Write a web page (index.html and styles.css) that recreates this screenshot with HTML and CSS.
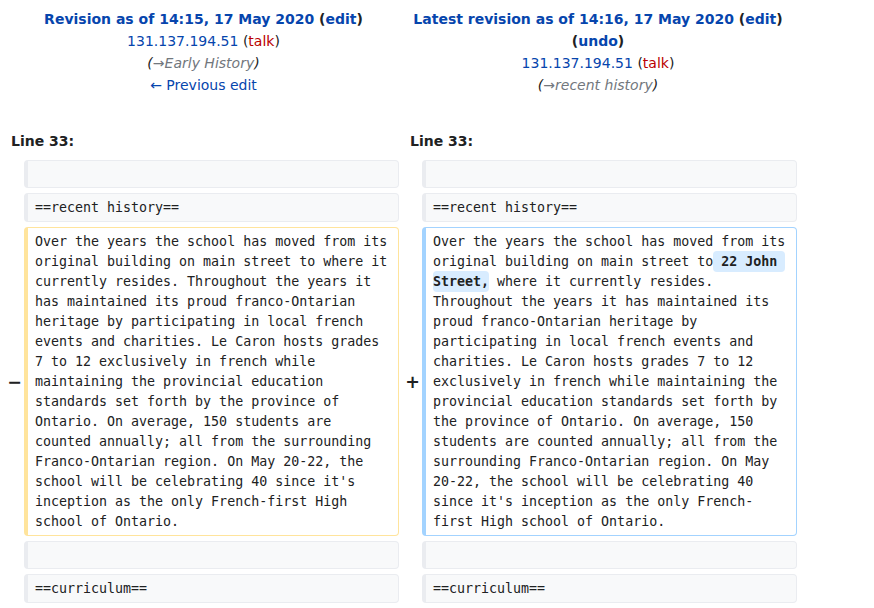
FILE: index.html
```html
<!DOCTYPE html>
<html lang="en">
<head>
<meta charset="utf-8">
<title>Difference between revisions</title>
<link rel="stylesheet" href="styles.css">
</head>
<body>
<div class="diff-head">
  <div class="head-cell head-left">
    <div class="title"><a href="#">Revision as of 14:15, 17 May 2020</a> (<a href="#">edit</a>)</div>
    <div><a href="#">131.137.194.51</a> (<a href="#" class="new">talk</a>)</div>
    <div class="comment">(<span class="autocomment">→Early History</span>)</div>
    <div><a href="#">← Previous edit</a></div>
  </div>
  <div class="head-cell head-right">
    <div class="title"><a href="#">Latest revision as of 14:16, 17 May 2020</a> (<a href="#">edit</a>)</div>
    <div class="title">(<a href="#">undo</a>)</div>
    <div><a href="#">131.137.194.51</a> (<a href="#" class="new">talk</a>)</div>
    <div class="comment">(<span class="autocomment">→recent history</span>)</div>
  </div>
</div>

<div class="diff-lineno">
  <div class="lineno lineno-left">Line 33:</div>
  <div class="lineno lineno-right">Line 33:</div>
</div>

<div class="diff-body">
  <div class="marker"></div>
  <div class="box context empty"></div>
  <div class="marker"></div>
  <div class="box context empty"></div>

  <div class="marker"></div>
  <div class="box context">==recent history==</div>
  <div class="marker"></div>
  <div class="box context">==recent history==</div>

  <div class="marker">−</div>
  <div class="box deleted">Over the years the school has moved from its original building on main street to where it currently resides. Throughout the years it has maintained its proud franco-Ontarian heritage by participating in local french events and charities. Le Caron hosts grades 7 to 12 exclusively in french while maintaining the provincial education standards set forth by the province of Ontario. On average, 150 students are counted annually; all from the surrounding Franco-Ontarian region. On May 20-22, the school will be celebrating 40 since it's inception as the only French-first High school of Ontario.</div>
  <div class="marker">+</div>
  <div class="box added">Over the years the school has moved from its original building on main street to<ins class="change"> 22 John Street,</ins> where it currently resides. Throughout the years it has maintained its proud franco-Ontarian heritage by participating in local french events and charities. Le Caron hosts grades 7 to 12 exclusively in french while maintaining the provincial education standards set forth by the province of Ontario. On average, 150 students are counted annually; all from the surrounding Franco-Ontarian region. On May 20-22, the school will be celebrating 40 since it's inception as the only French-first High school of Ontario.</div>

  <div class="marker"></div>
  <div class="box context empty"></div>
  <div class="marker"></div>
  <div class="box context empty"></div>

  <div class="marker"></div>
  <div class="box context">==curriculum==</div>
  <div class="marker"></div>
  <div class="box context">==curriculum==</div>
</div>
</body>
</html>
```

FILE: styles.css
```css
html, body {
  background: #ffffff;
}
body {
  margin: 8px;
  color: #202122;
  font-family: "DejaVu Sans", sans-serif;
  font-size: 14px;
  line-height: 22px;
}
a {
  color: #0645ad;
  text-decoration: none;
}
a.new {
  color: #ba0000;
}

.diff-head,
.diff-lineno,
.diff-body {
  display: grid;
  grid-template-columns: 16px 375px 23px 375px;
}

.head-cell {
  text-align: center;
}
.head-left {
  grid-column: 1 / 3;
}
.head-right {
  grid-column: 3 / 5;
}
.title {
  font-weight: bold;
}
.comment {
  font-style: italic;
}
.autocomment {
  color: #72777d;
}

.diff-lineno {
  margin-top: 34px;
}
.lineno {
  font-weight: bold;
}
.lineno-left {
  grid-column: 1 / 3;
  padding-left: 3px;
}
.lineno-right {
  grid-column: 3 / 5;
  padding-left: 11px;
}

.diff-body {
  margin-top: 8px;
  row-gap: 5px;
}
.marker {
  display: flex;
  align-items: center;
  justify-content: flex-end;
  padding-right: 2px;
  font-weight: bold;
  font-size: 17.5px;
  line-height: 20px;
}
.box {
  font-family: "DejaVu Sans Mono", monospace;
  font-size: 13.3px;
  line-height: 20px;
  padding: 3.5px 7px;
  border: 1px solid #eaecf0;
  border-left-width: 4px;
  border-radius: 4px;
  white-space: pre-wrap;
  overflow-wrap: break-word;
  color: #202122;
}
.context {
  background: #f8f9fa;
}
.empty {
  height: 28px;
  box-sizing: border-box;
}
.deleted {
  background: #ffffff;
  border-color: #ffe49c;
}
.added {
  background: #ffffff;
  border-color: #a3d3ff;
}
.change {
  text-decoration: none;
  font-weight: bold;
  background: #d8ecff;
  padding: 3px 0;
  border-radius: 4px;
  -webkit-box-decoration-break: clone;
  box-decoration-break: clone;
}
```
